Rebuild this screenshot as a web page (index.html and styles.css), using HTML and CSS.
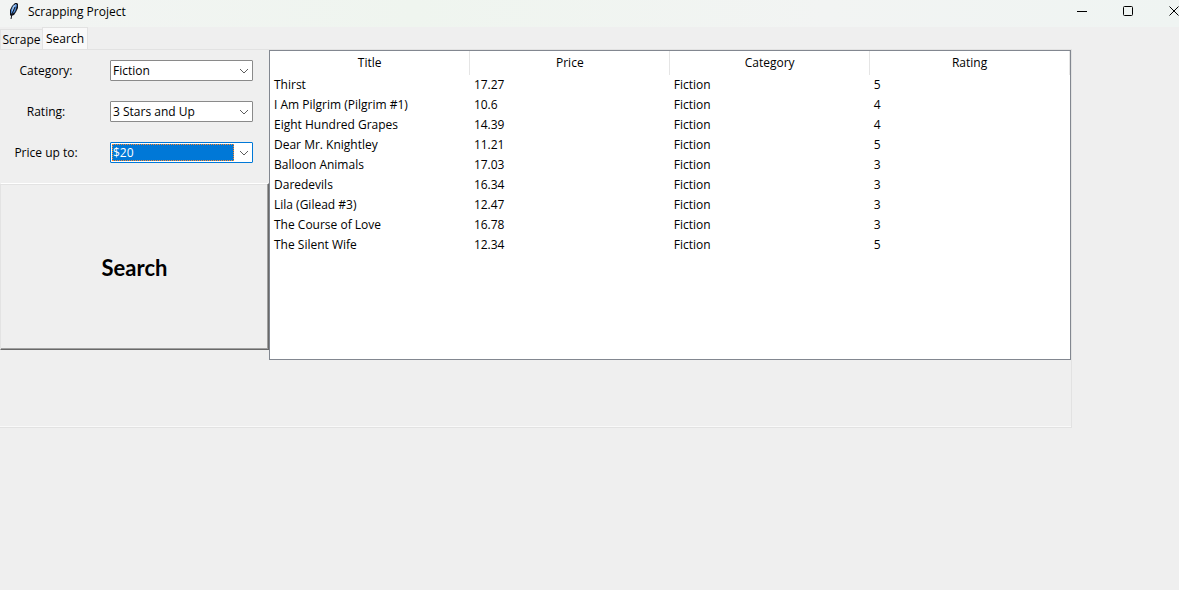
FILE: index.html
```html
<!DOCTYPE html>
<html lang="en">
<head>
<meta charset="utf-8">
<meta name="viewport" content="width=device-width, initial-scale=1">
<title>Scrapping Project</title>
<link rel="stylesheet" href="styles.css">
</head>
<body>
<header class="titlebar">
  <svg class="feather" width="12" height="18" viewBox="0 0 12 18" aria-hidden="true">
    <path d="M9 1 L10 2 L10 6 L8 10 L6 13 L3 14 L2 13 L2 8 L4 4 L7 1 Z" fill="#10131c"/>
    <path d="M8 2 L9 3 L8 7 L7 10 L4 12 L3 11 L3 8 L5 4 Z" fill="#4c86d0"/>
    <path d="M8 2 L7 5 L4 10 L4 8 L5 4 Z" fill="#9cc3f0"/>
    <path d="M7 5 L4 12 L3 17" fill="none" stroke="#10131c"/>
  </svg>
  <h1 class="window-title">Scrapping Project</h1>
  <div class="window-controls">
    <button class="control" type="button" aria-label="Minimize">
      <svg width="10" height="10" viewBox="0 0 10 10"><path d="M0 5.5H10" stroke="#000"/></svg>
    </button>
    <button class="control" type="button" aria-label="Maximize">
      <svg width="10" height="10" viewBox="0 0 10 10"><rect x=".5" y=".5" width="9" height="9" rx="1" fill="none" stroke="#000"/></svg>
    </button>
    <button class="control" type="button" aria-label="Close">
      <svg width="10" height="10" viewBox="0 0 10 10"><path d="M.5 .5L9.5 9.5M9.5 .5L.5 9.5" stroke="#000"/></svg>
    </button>
  </div>
</header>
<nav class="tabs" role="tablist">
  <button class="tab" type="button" role="tab" aria-selected="false">Scrape</button>
  <button class="tab tab-active" type="button" role="tab" aria-selected="true">Search</button>
</nav>
<main class="panel">
  <form class="filters">
    <div class="field">
      <label for="category">Category:</label>
      <div class="combo">
        <select id="category"><option>Fiction</option></select>
        <svg class="chevron" width="10" height="6" viewBox="0 0 10 6"><path d="M1 1L5 5L9 1"/></svg>
      </div>
    </div>
    <div class="field">
      <label for="rating">Rating:</label>
      <div class="combo">
        <select id="rating"><option>3 Stars and Up</option></select>
        <svg class="chevron" width="10" height="6" viewBox="0 0 10 6"><path d="M1 1L5 5L9 1"/></svg>
      </div>
    </div>
    <div class="field">
      <label for="price">Price up to:</label>
      <div class="combo combo-focused">
        <select id="price"><option>$20</option></select>
        <svg class="chevron" width="10" height="6" viewBox="0 0 10 6"><path d="M1 1L5 5L9 1"/></svg>
      </div>
    </div>
    <button class="search-button" type="button">Search</button>
  </form>
  <div class="results">
    <table>
      <thead><tr><th>Title</th><th>Price</th><th>Category</th><th>Rating</th></tr></thead>
      <tbody>
        <tr><td>Thirst</td><td>17.27</td><td>Fiction</td><td>5</td></tr>
        <tr><td>I Am Pilgrim (Pilgrim #1)</td><td>10.6</td><td>Fiction</td><td>4</td></tr>
        <tr><td>Eight Hundred Grapes</td><td>14.39</td><td>Fiction</td><td>4</td></tr>
        <tr><td>Dear Mr. Knightley</td><td>11.21</td><td>Fiction</td><td>5</td></tr>
        <tr><td>Balloon Animals</td><td>17.03</td><td>Fiction</td><td>3</td></tr>
        <tr><td>Daredevils</td><td>16.34</td><td>Fiction</td><td>3</td></tr>
        <tr><td>Lila (Gilead #3)</td><td>12.47</td><td>Fiction</td><td>3</td></tr>
        <tr><td>The Course of Love</td><td>16.78</td><td>Fiction</td><td>3</td></tr>
        <tr><td>The Silent Wife</td><td>12.34</td><td>Fiction</td><td>5</td></tr>
      </tbody>
    </table>
  </div>
</main>
</body>
</html>
```
FILE: styles.css
```css
* { box-sizing: border-box; }

body {
  margin: 0;
  min-height: 100vh;
  overflow-x: hidden;
  background: #efefef;
  color: #000;
  font: 12px/16px "Open Sans", "Noto Sans", sans-serif;
}

button, select { font: inherit; color: inherit; }

.titlebar {
  display: flex;
  align-items: center;
  height: 27px;
  padding: 0 0 3px 8px;
  overflow: hidden;
  background: linear-gradient(90deg, #f2f4f3, #eff5ef 35%, #f2f4f3 70%, #eff4f2);
}

.feather { margin-top: -2px; }

.window-title {
  margin: 0 auto 0 8px;
  font-size: 12px;
  font-weight: 400;
}

.window-controls {
  display: flex;
  margin: -2px -18px 0 0;
}

.control {
  display: flex;
  justify-content: center;
  width: 46px;
  padding: 0;
  border: 0;
  background: none;
}

.tabs {
  display: flex;
  align-items: flex-end;
  height: 22px;
}

.tab {
  width: 42px;
  height: 20px;
  padding: 1px 0 0;
  border: 1px solid #e2e2e2;
  border-width: 1px 0 0 1px;
  background: #f0f0f0;
}

.tab-active {
  width: 46px;
  height: 22px;
  padding: 0;
  border-width: 1px 1px 0;
  background: #f9f9f9;
}

.panel {
  display: flex;
  align-items: flex-start;
  min-height: 379px;
  margin-right: 107px;
  border: solid #e2e2e2;
  border-width: 1px 1px 1px 0;
  box-shadow: inset 0 -1px #f9f9f9;
}

.filters {
  display: flex;
  flex: none;
  flex-direction: column;
  gap: 19px;
  width: 269px;
  padding-top: 10px;
}

.field {
  display: flex;
  align-items: flex-start;
  height: 22px;
}

.field label {
  width: 92px;
  margin-right: 18px;
  padding-top: 3px;
  text-align: center;
}

.combo {
  position: relative;
  width: 143px;
  height: 21px;
  border: 1px solid #8a8a8a;
  border-radius: 1px;
  background: #fff;
}

.combo select {
  position: relative;
  display: block;
  width: 100%;
  height: 100%;
  padding: 0 20px 0 2px;
  border: 0;
  outline: 0;
  appearance: none;
  background: transparent;
}

.combo-focused { border-color: #0078d7; }

.combo-focused select { color: #fff; }

.combo-focused::before {
  content: "";
  position: absolute;
  inset: 1px 18px 1px 1px;
  border: 1px dotted #ff8728;
  background: #0078d7;
}

.chevron {
  position: absolute;
  top: 7px;
  right: 3px;
  fill: none;
  stroke: #5d5d5d;
  pointer-events: none;
}

.search-button {
  height: 167px;
  padding: 2px 0 0;
  border: 1px solid;
  border-color: #fff #696969 #696969 #e3e3e3;
  box-shadow: inset -1px -1px #a0a0a0, inset 0 1px #e3e3e3;
  background: #efefef;
  font: 700 22px/28px Lato, sans-serif;
}

.results {
  flex: 1;
  min-height: 310px;
  border: 1px solid #828790;
  background: #fff;
}

table {
  width: 100%;
  table-layout: fixed;
  border-collapse: collapse;
}

th {
  height: 24px;
  padding: 0;
  border-right: 1px solid #e5e5e5;
  font-weight: 400;
}

td {
  height: 20px;
  padding: 0 4px;
}
```
